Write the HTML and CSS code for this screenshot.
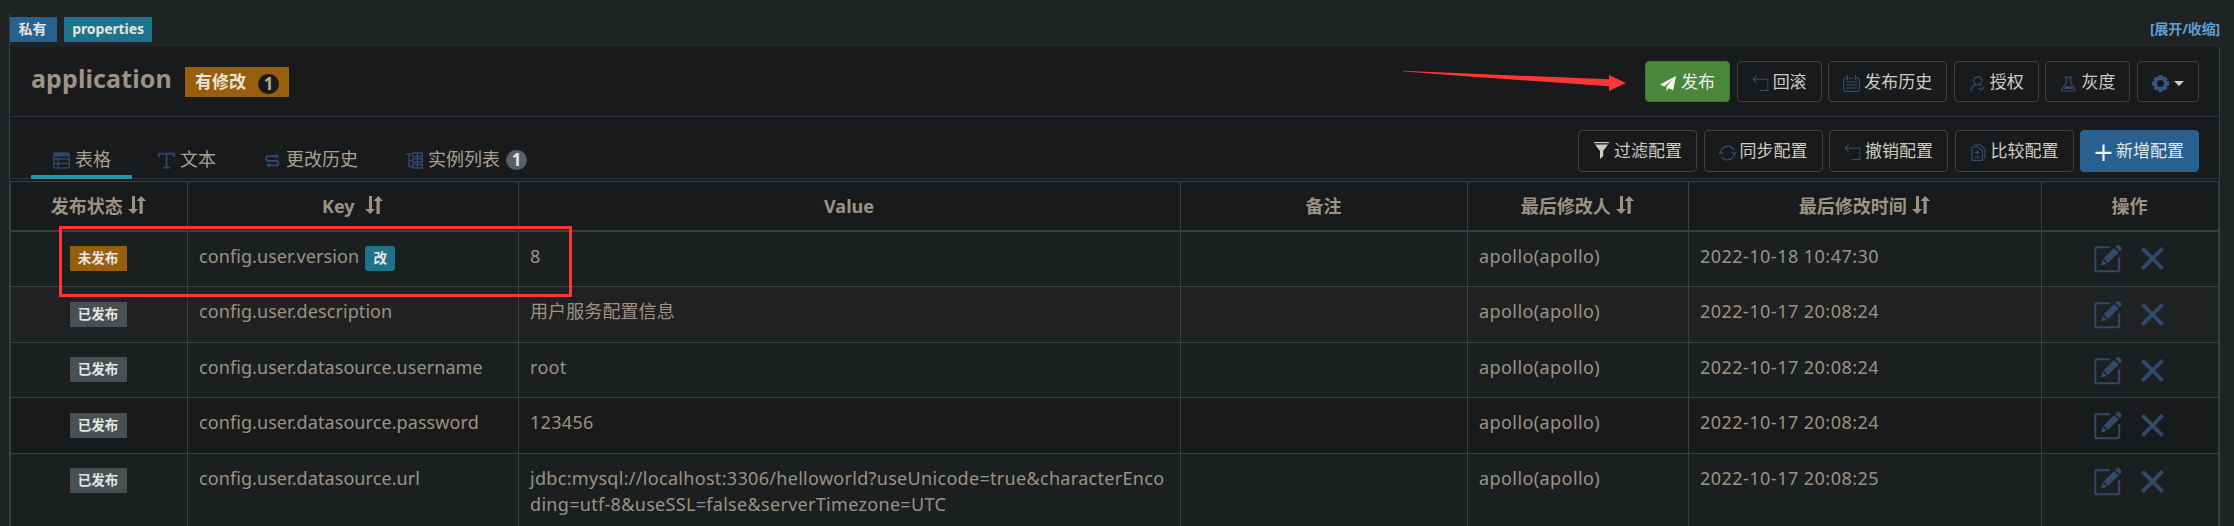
FILE: index.html
```html
<!DOCTYPE html>
<html lang="zh-CN">
<head>
<meta charset="utf-8">
<title>application</title>
<link rel="stylesheet" href="styles.css">
</head>
<body>
<svg class="defs" width="0" height="0">
  <symbol id="sort" viewBox="0 0 18 18"><path d="M4 0H7V13H10L5.2 18L0 13H4ZM11.5 18V5H8.5L13.3 0L18 5H14.7V18Z" fill="currentColor"/></symbol>
  <symbol id="edit" viewBox="0 0 29 29"><path d="M16 3.3H2.5Q1.3 3.3 1.3 4.5V26Q1.3 27.2 2.5 27.2H24Q25.2 27.2 25.2 26V13" fill="none" stroke="currentColor" stroke-width="2"/><path d="M7 21.5L8.6 15.6L13 20ZM9.6 14.4L20 4L24.6 8.6L14.2 19ZM21.2 2.8L22.8 1.2Q24.2.3 25.5 1.6L27 3.1Q28.2 4.6 27.2 6L25.8 7.4Z" fill="currentColor"/></symbol>
  <symbol id="cross" viewBox="0 0 24 24"><path d="M1.5 1.5L22.5 22.5M22.5 1.5L1.5 22.5" stroke="currentColor" stroke-width="4" fill="none"/></symbol>
  <symbol id="undo" viewBox="0 0 17 18"><path d="M4.5.7L.8 4.5L4.5 8.3M.8 4.5H16.4V16.4H7.5" fill="none" stroke="currentColor" stroke-width="1.2"/></symbol>
</svg>
<div class="namespace">
  <header class="strip">
    <span class="label primary">私有</span>
    <span class="label info">properties</span>
    <a class="toggle">[展开/收缩]</a>
  </header>
  <section class="panel">
    <div class="heading">
      <h4 class="name">application</h4>
      <span class="modified">有修改<span class="count dark">1</span></span>
      <div class="buttons">
        <button class="btn success"><svg viewBox="0 0 17 17"><path d="M16 1L0 9.6L4.3 11.4L12.6 4.6L6.2 12L6.5 12.4V16L8.6 13.3L13.2 15.2Z" fill="#f4f6f2"/></svg>发布</button>
        <button class="btn"><svg viewBox="0 0 17 18"><use href="#undo"/></svg>回滚</button>
        <button class="btn"><svg viewBox="0 0 17 17"><path d="M4 3H2.5Q.6 3 .6 5V14.5Q.6 16.4 2.5 16.4H14.5Q16.4 16.4 16.4 14.5V5Q16.4 3 14.5 3H13M6 3H11M4.5 0V5M12.5 0V5M3 7H14M3 10H14M3 13H14" fill="none" stroke="currentColor" stroke-width="1.1"/></svg>发布历史</button>
        <button class="btn"><svg viewBox="0 0 17 17"><path d="M2 16.5Q2 10.5 7.2 9.6M10.3 9.6Q11.8 10.1 12.7 11.2" fill="none" stroke="currentColor" stroke-width="1.2"/><circle cx="8.7" cy="5.8" r="4" fill="none" stroke="currentColor" stroke-width="1.2"/><path d="M9.8 13L12 15.2L15.2 12" fill="none" stroke="currentColor" stroke-width="1.2"/></svg>授权</button>
        <button class="btn"><svg viewBox="0 0 17 17"><path d="M4.5 2.2H12.5M6.3 2.2V8L1.8 14Q1.5 16 3.2 16H13.8Q15.5 16 15.2 14L10.7 8V2.2" fill="none" stroke="currentColor" stroke-width="1.2"/><path d="M3.5 14L5.5 11.3Q8 10.3 9 11.3Q10.5 12 11.5 11.2L13.5 14Z" fill="currentColor"/></svg>灰度</button>
        <button class="btn gear"><svg viewBox="0 0 17 17"><path fill-rule="evenodd" fill="currentColor" d="M6.6 0H10.4L10.9 2.5L12.9 1.2L15.7 4L14.4 6.1L17 6.6V10.4L14.4 10.9L15.7 13L12.9 15.8L10.9 14.5L10.4 17H6.6L6.1 14.5L4.1 15.8L1.3 13L2.6 10.9L0 10.4V6.6L2.6 6.1L1.3 4L4.1 1.2L6.1 2.5ZM8.5 5A3.5 3.5 0 1 0 8.5 12A3.5 3.5 0 1 0 8.5 5Z"/></svg><i class="caret"></i></button>
      </div>
    </div>
    <div class="toolbar">
      <nav class="tabs">
        <a class="tab active"><svg viewBox="0 0 17 17"><path d="M2.5 1H14.5Q16.3 1 16.3 2.8V14.2Q16.3 16 14.5 16H2.5Q.7 16 .7 14.2V2.8Q.7 1 2.5 1ZM.7 7H16M.7 11.5H16M5 5V16" fill="none" stroke="currentColor" stroke-width="1.4"/><path d="M1 1H16V4.6H1Z" fill="currentColor"/></svg>表格</a>
        <a class="tab"><svg viewBox="0 0 17 17"><path d="M1 5V1.6H16V5M8.5 1.6V15.6M5 15.6H12" fill="none" stroke="currentColor" stroke-width="1.8"/></svg>文本</a>
        <a class="tab"><svg viewBox="0 0 17 17"><path d="M13 4.3H4.2Q2 4.3 2 6.6T4.2 9H12Q14.4 9 14.4 11.2T12 13.4H4" fill="none" stroke="currentColor" stroke-width="1.9"/><path d="M11.5 1.5L15 4.3L11.5 7ZM5.5 10.8L2 13.4L5.5 16Z" fill="currentColor"/></svg>更改历史</a>
        <a class="tab"><svg viewBox="0 0 17 17"><path d="M0 2H6M3 2V14.5H6M3 8.5H6M6.6 1H16.3V4.5H6.6ZM6.6 6.7H16.3V10.2H6.6ZM6.6 12.4H16.3V16H6.6ZM11.5 1V16" fill="none" stroke="currentColor" stroke-width="1.5"/></svg>实例列表<span class="count">1</span></a>
      </nav>
      <div class="buttons">
        <button class="btn"><svg class="filter" viewBox="0 0 17 17"><path d="M1 .6H16" stroke="#d0cbc2" stroke-width="1.2"/><path d="M2 2.6H15L10.2 9V14L7 17V9Z" fill="#d0cbc2"/></svg>过滤配置</button>
        <button class="btn"><svg viewBox="0 0 17 17"><path d="M1.6 8.5A7 7 0 0 1 14.8 6M15.4 9.5A7 7 0 0 1 2.5 12.5M13 8L15.4 10.3L17 8M0 10L1.6 7.8L4 10" fill="none" stroke="currentColor" stroke-width="1.2"/></svg>同步配置</button>
        <button class="btn"><svg viewBox="0 0 17 18"><use href="#undo"/></svg>撤销配置</button>
        <button class="btn"><svg viewBox="0 0 17 17"><path d="M2 3H8.5L12.5 6.8V16.3H2ZM4.5 .8H10.5L14.8 5V14.5M4.8 8.3H9.8M7.3 5.8V10.8M4.8 13H9.8" fill="none" stroke="currentColor" stroke-width="1.2"/></svg>比较配置</button>
        <button class="btn solid"><svg viewBox="0 0 17 17"><path d="M8.5 .5V17M.5 8.8H16.5" stroke="#f2f5f8" stroke-width="2.2" fill="none"/></svg>新增配置</button>
      </div>
    </div>
    <table class="items">
      <colgroup><col class="c1"><col class="c2"><col class="c3"><col class="c4"><col class="c5"><col class="c6"><col class="c7"></colgroup>
      <thead>
        <tr><th>发布状态 <svg class="sort"><use href="#sort"/></svg></th><th>Key&nbsp; <svg class="sort"><use href="#sort"/></svg></th><th>Value</th><th>备注</th><th>最后修改人 <svg class="sort"><use href="#sort"/></svg></th><th>最后修改时间 <svg class="sort"><use href="#sort"/></svg></th><th>操作</th></tr>
      </thead>
      <tbody>
        <tr class="first"><td class="state"><span class="tag warn">未发布</span></td><td class="key">config.user.version<span class="tag mod">改</span></td><td class="value">8</td><td></td><td class="who">apollo(apollo)</td><td class="time">2022-10-18 10:47:30</td><td class="ops"><svg class="edit"><use href="#edit"/></svg><svg class="cross"><use href="#cross"/></svg></td></tr>
        <tr class="hover"><td class="state"><span class="tag">已发布</span></td><td class="key">config.user.description</td><td class="value">用户服务配置信息</td><td></td><td class="who">apollo(apollo)</td><td class="time">2022-10-17 20:08:24</td><td class="ops"><svg class="edit"><use href="#edit"/></svg><svg class="cross"><use href="#cross"/></svg></td></tr>
        <tr class="short"><td class="state"><span class="tag">已发布</span></td><td class="key">config.user.datasource.username</td><td class="value">root</td><td></td><td class="who">apollo(apollo)</td><td class="time">2022-10-17 20:08:24</td><td class="ops"><svg class="edit"><use href="#edit"/></svg><svg class="cross"><use href="#cross"/></svg></td></tr>
        <tr class="plain"><td class="state"><span class="tag">已发布</span></td><td class="key">config.user.datasource.password</td><td class="value">123456</td><td></td><td class="who">apollo(apollo)</td><td class="time">2022-10-17 20:08:24</td><td class="ops"><svg class="edit"><use href="#edit"/></svg><svg class="cross"><use href="#cross"/></svg></td></tr>
        <tr class="last"><td class="state"><span class="tag">已发布</span></td><td class="key">config.user.datasource.url</td><td class="value">jdbc:mysql://localhost:3306/helloworld?useUnicode=true&amp;characterEnco<br>ding=utf-8&amp;useSSL=false&amp;serverTimezone=UTC</td><td></td><td class="who">apollo(apollo)</td><td class="time">2022-10-17 20:08:25</td><td class="ops"><svg class="edit"><use href="#edit"/></svg><svg class="cross"><use href="#cross"/></svg></td></tr>
      </tbody>
    </table>
  </section>
</div>
<div class="mark-box"></div>
<svg class="mark-arrow" viewBox="0 0 226 20"><path d="M0 3.2L1 2.8L207 11.3V7L224 15L207 23V18.3L60 8Z" transform="translate(0 -3)" fill="#fb3733"/></svg>
</body>
</html>
```
FILE: styles.css
```css
* { box-sizing: border-box; }
body {
  margin: 0;
  height: 526px;
  overflow: hidden;
  background: #1f2324;
  color: #9d9283;
  font: 18px/26px "Noto Sans", "Noto Sans CJK SC", sans-serif;
}
.defs { position: absolute; }
.namespace { padding: 14px 14px 0 9px; }
.strip {
  display: flex;
  align-items: flex-start;
  gap: 7px;
  height: 33px;
  padding-top: 3px;
  border-left: 1px solid #3a3f41;
}
.label {
  height: 25px;
  line-height: 24px;
  text-align: center;
  color: #e6e3df;
  font-size: 14px;
  font-weight: bold;
}
.primary { width: 47px; padding-right: 2px; background: #28608f; }
.info { width: 88px; background: #1c738c; letter-spacing: -.1px; }
.toggle {
  margin-left: auto;
  line-height: 24px;
  font-size: 14px;
  font-weight: bold;
  letter-spacing: -.15px;
  color: #5c9fd8;
}
.panel {
  width: 2211px;
  background: #191a1c;
  border: solid #3a3f41;
  border-width: 0 1px;
}
.heading {
  display: flex;
  height: 70px;
  padding: 0 20px 0 21px;
  border-bottom: 1px solid #223049;
}
.name {
  width: 154px;
  margin: 13px 0 0;
  font-size: 25px;
  line-height: 36px;
  font-weight: bold;
  letter-spacing: .12px;
}
.modified {
  display: flex;
  align-items: center;
  width: 104px;
  height: 30px;
  margin-top: 20px;
  padding-left: 10px;
  gap: 12px;
  background: #985e0d;
  color: #e8e3da;
  font-size: 17px;
  font-weight: bold;
}
.count {
  width: 21px;
  height: 20px;
  border-radius: 10px;
  background: #585f62;
  color: #e8e6e3;
  font-size: 17px;
  line-height: 20px;
  font-weight: bold;
  text-align: center;
}
.dark { background: #191a1c; color: #b5a995; margin-top: 4px; }
.buttons { display: flex; gap: 6.6px; margin: 14px 0 0 auto; }
.btn {
  display: flex;
  align-items: center;
  width: 85px;
  min-width: max-content;
  height: 41px;
  padding: 0 14px;
  gap: 4px;
  border: 1px solid #3f4345;
  border-radius: 4px;
  background: #191a1c;
  color: #d0cbc2;
  font: 17px/26px "Noto Sans", "Noto Sans CJK SC", sans-serif;
}
.btn svg { width: 17px; height: 17px; margin-top: 3px; color: #354d70; }
.btn svg.filter { margin-top: -2px; }
.success { background: #4b873b; border-color: #3a7a35; color: #f0f2ee; }
.solid { background: #28608f; border-color: #28608f; color: #e8e6e3; }
.gear { width: 61px; gap: 5px; }
.btn.gear svg { color: #375680; margin-top: 4px; }
.caret {
  margin-top: 3px;
  border: solid transparent;
  border-width: 5px 5px 0;
  border-top-color: #d0cbc2;
}
.toolbar {
  display: flex;
  height: 62px;
  padding: 0 20px 0 21px;
  border-bottom: 1px solid #223049;
}
.toolbar .buttons { gap: 6.5px; margin-top: 13px; }
.toolbar .btn { height: 42px; width: 118.6px; }
.tabs { display: flex; gap: 4px; }
.tab {
  display: flex;
  align-items: center;
  gap: 5px;
  height: 62px;
  padding: 21px 22px 0 22px;
  color: #a9a090;
}
.tab svg { width: 17px; height: 17px; margin-top: 3px; color: #304768; }
.tab .count { margin-left: 1px; margin-top: 3px; }
.active { border-bottom: 4px solid #2792ae; padding-right: 21px; padding-top: 25px; }
.items {
  width: 2209px;
  margin-top: 2px;
  table-layout: fixed;
  border-collapse: separate;
  border-spacing: 0;
  border-right: 1px solid #3a3f41;
}
.c1 { width: 177px; }
.c2 { width: 331px; }
.c3 { width: 662px; }
.c4 { width: 287px; }
.c5 { width: 221px; }
.c6 { width: 353px; }
.c7 { width: 177px; }
th, td { border: solid #3a3f41; border-width: 1px 0 0 1px; padding: 0; }
th { height: 49px; padding-right: 1px; font-weight: bold; }
.sort { width: 18px; height: 18px; margin-left: 1px; vertical-align: -1px; }
td { height: 56px; padding: 11px 0 0 11px; vertical-align: top; line-height: 26px; white-space: nowrap; }
.first td { border-top-width: 2px; }
.first, .short, .last { background: #1b1f20; }
.hover { background: #202122; }
.short td { height: 55px; }
.last td { height: 80px; }
td.state { padding: 15px 2px 0 0; text-align: center; }
.first td.state { padding-top: 14px; }
.short td.state, .last td.state { padding-top: 14px; }
.tag {
  display: inline-block;
  width: 57px;
  height: 25px;
  background: #495053;
  color: #e8e6e3;
  font-size: 13.5px;
  line-height: 25px;
  font-weight: bold;
  text-align: center;
  vertical-align: top;
}
.warn { background: #985e0d; }
.mod { width: 30px; margin: 3px 0 0 6px; border-radius: 3px; background: #1c738c; }
.key { letter-spacing: .08px; }
.value { letter-spacing: .31px; }
.hover .value { letter-spacing: .1px; }
.who { letter-spacing: .42px; }
.time { letter-spacing: .47px; }
td.ops { padding: 13px 0 0 52px; color: #32496b; }
.first td.ops { padding-top: 12px; }
.edit { width: 29px; height: 29px; vertical-align: top; }
.cross { width: 23px; height: 23px; margin: 3px 0 0 18px; vertical-align: top; }
.mark-box {
  position: absolute;
  left: 59px;
  top: 226px;
  width: 513px;
  height: 71px;
  border: 3px solid #fb3733;
}
.mark-arrow {
  position: absolute;
  left: 1402px;
  top: 71px;
  width: 226px;
  height: 20px;
  overflow: visible;
}
```
